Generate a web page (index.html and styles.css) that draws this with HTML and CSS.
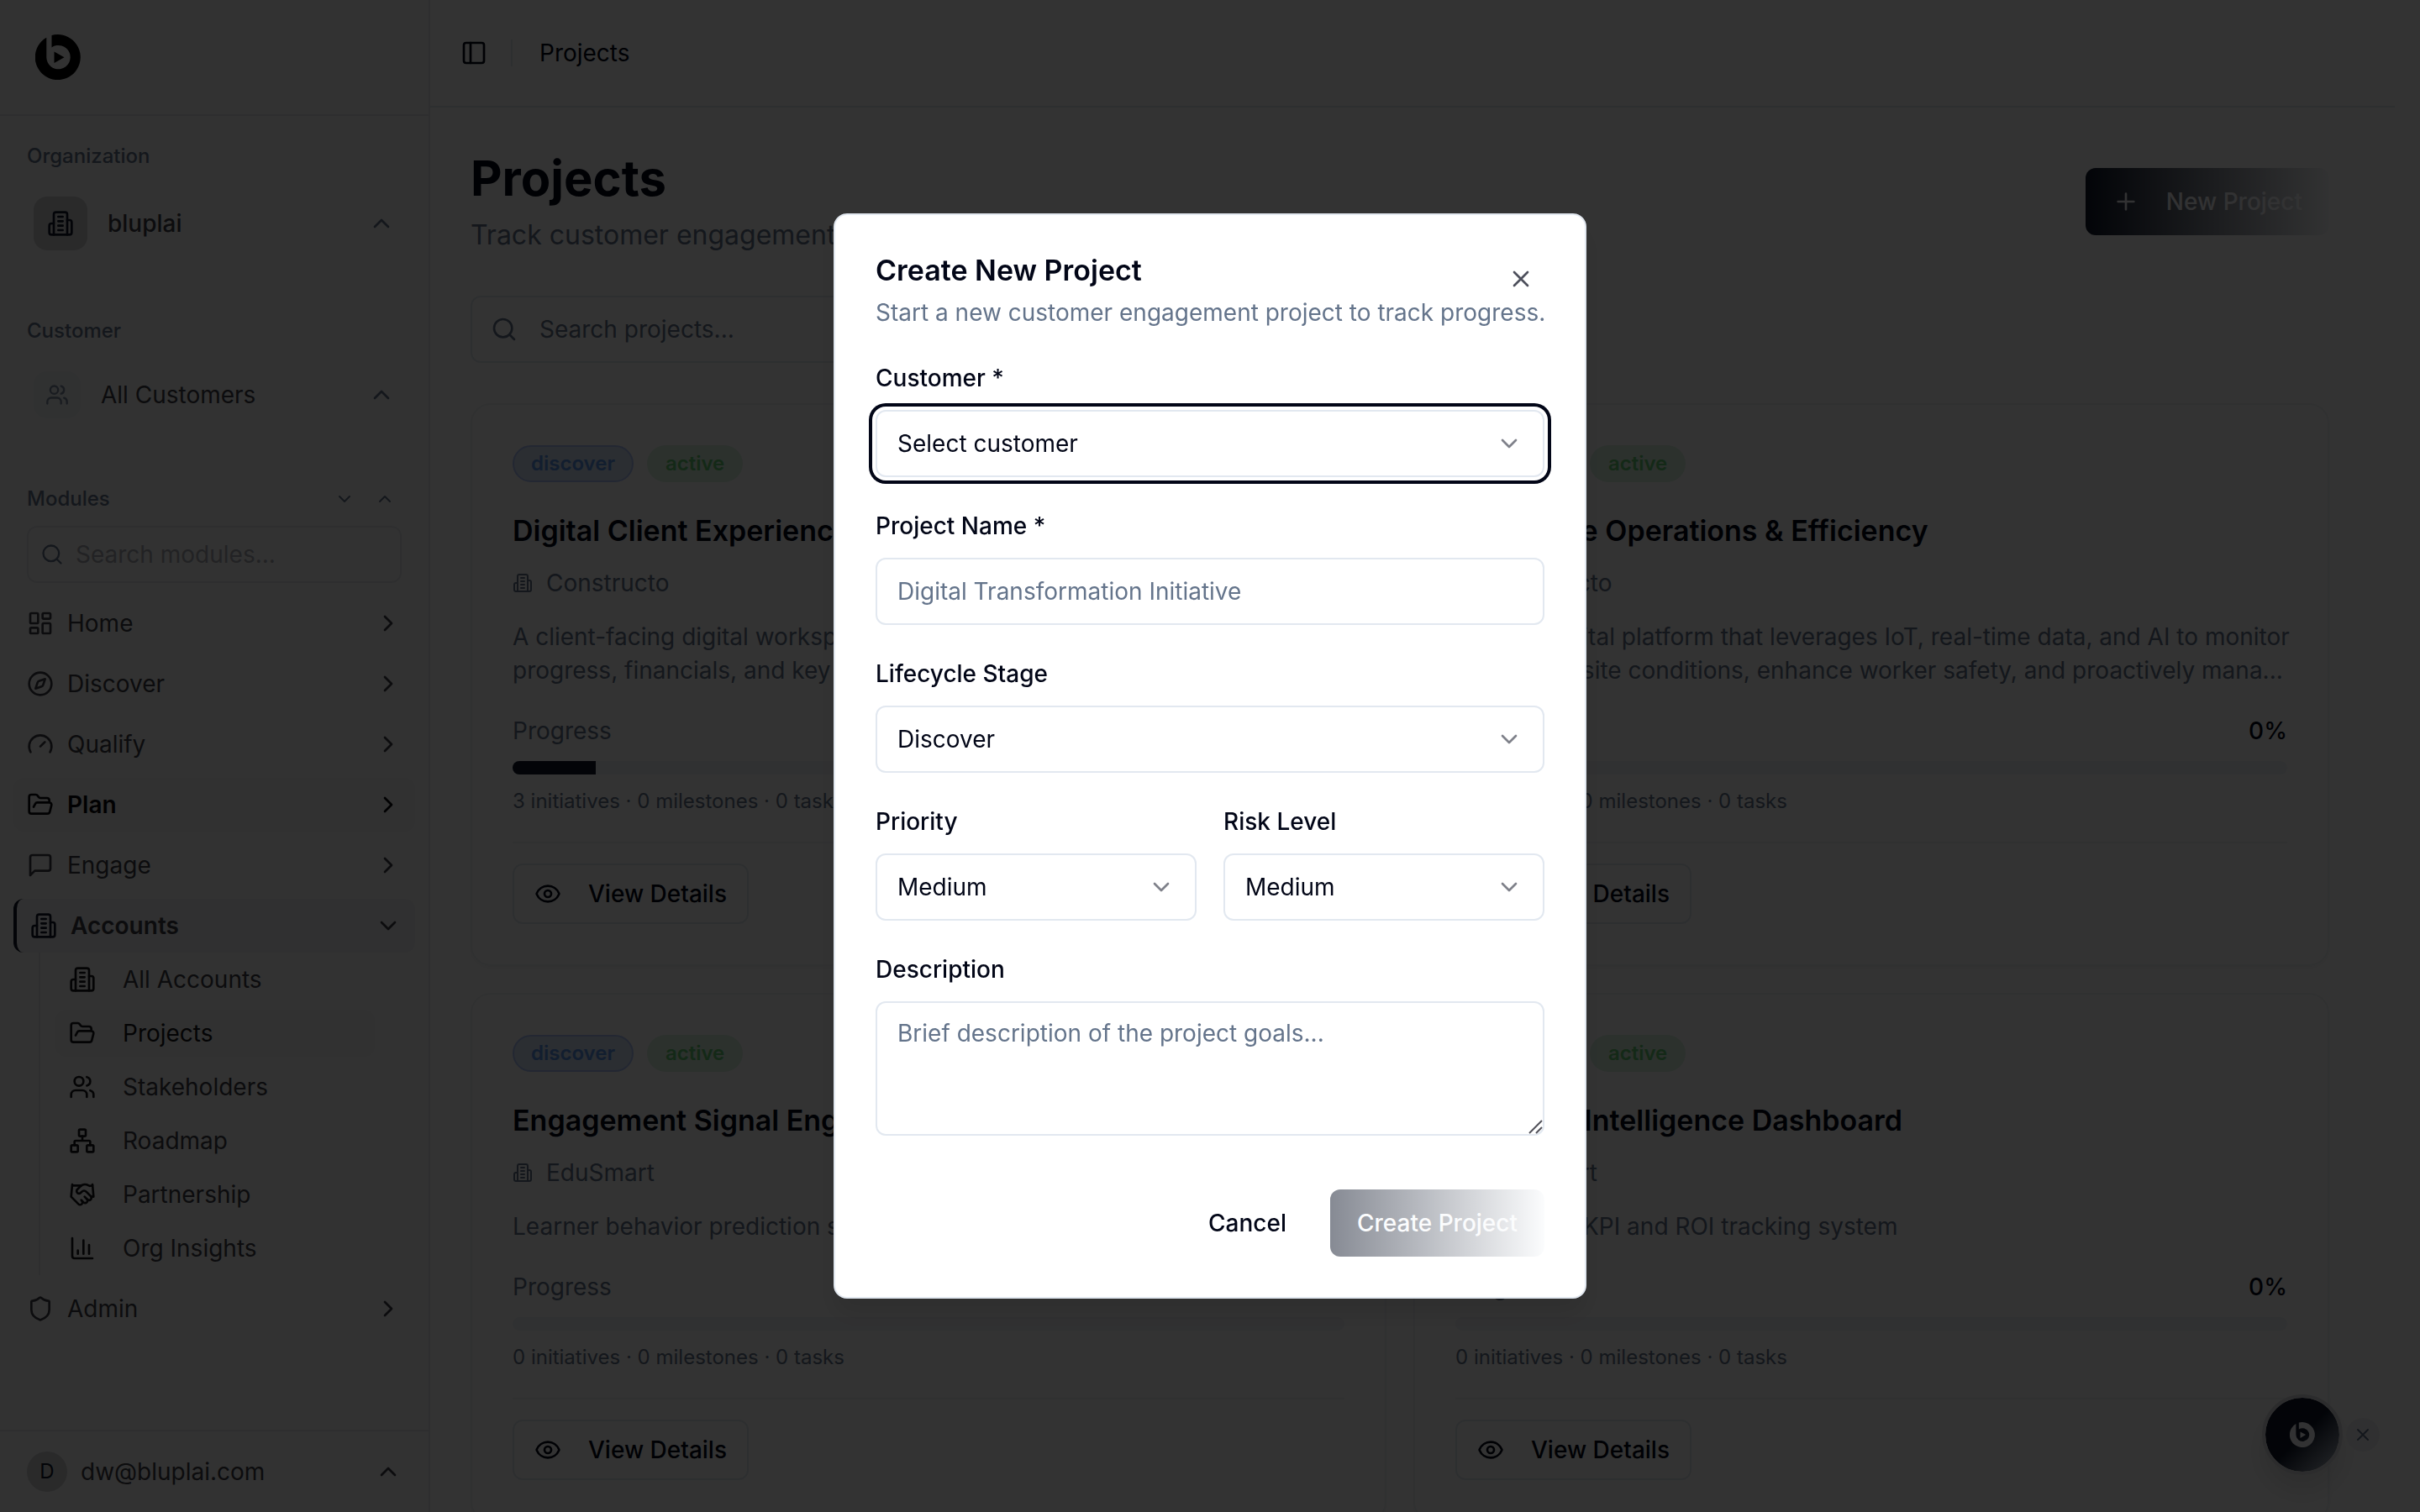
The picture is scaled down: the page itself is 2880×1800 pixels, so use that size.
FILE: index.html
```html
<!DOCTYPE html>
<html lang="en">
<head>
<meta charset="UTF-8">
<meta name="viewport" content="width=device-width, initial-scale=1.0">
<title>Projects</title>
<link rel="stylesheet" href="styles.css">
</head>
<body>

<!-- Icon set -->
<svg class="sprite" aria-hidden="true">
    <symbol id="logo" viewBox="0 0 54 54">
        <path fill="currentColor" fill-rule="evenodd" d="M19.500 1.100A27 27 0 1 1 13.300 3.700V27.200A14.200 14.200 0 1 0 19.500 15.400Z"/>
        <path fill="currentColor" d="M22.500 20.500L34.500 27.200L22.500 34Z"/>
    </symbol>
    <symbol id="building" viewBox="0 0 24 24"><path d="M6 22V4a2 2 0 0 1 2-2h8a2 2 0 0 1 2 2v18Z"/><path d="M6 12H4a2 2 0 0 0-2 2v6a2 2 0 0 0 2 2h2"/><path d="M18 9h2a2 2 0 0 1 2 2v9a2 2 0 0 1-2 2h-2"/><path d="M10 6h4M10 10h4M10 14h4M10 18h4"/></symbol>
    <symbol id="users" viewBox="0 0 24 24"><path d="M16 21v-2a4 4 0 0 0-4-4H6a4 4 0 0 0-4 4v2"/><circle cx="9" cy="7" r="4"/><path d="M22 21v-2a4 4 0 0 0-3-3.870M16 3.130a4 4 0 0 1 0 7.750"/></symbol>
    <symbol id="dashboard" viewBox="0 0 24 24"><rect x="3" y="3" width="7" height="9" rx="1"/><rect x="14" y="3" width="7" height="5" rx="1"/><rect x="14" y="12" width="7" height="9" rx="1"/><rect x="3" y="16" width="7" height="5" rx="1"/></symbol>
    <symbol id="compass" viewBox="0 0 24 24"><path d="m16.240 7.760-1.804 5.411a2 2 0 0 1-1.265 1.265L7.760 16.240l1.804-5.411a2 2 0 0 1 1.265-1.265z"/><circle cx="12" cy="12" r="10"/></symbol>
    <symbol id="gauge" viewBox="0 0 24 24"><path d="m12 14 4-4"/><path d="M3.340 19a10 10 0 1 1 17.320 0"/></symbol>
    <symbol id="folder" viewBox="0 0 24 24"><path d="m6 14 1.500-2.900A2 2 0 0 1 9.240 10H20a2 2 0 0 1 1.940 2.500l-1.540 6a2 2 0 0 1-1.950 1.500H4a2 2 0 0 1-2-2V5a2 2 0 0 1 2-2h3.900a2 2 0 0 1 1.690.9l.81 1.200a2 2 0 0 0 1.670.9H18a2 2 0 0 1 2 2v2"/></symbol>
    <symbol id="message" viewBox="0 0 24 24"><path d="M21 15a2 2 0 0 1-2 2H7l-4 4V5a2 2 0 0 1 2-2h14a2 2 0 0 1 2 2z"/></symbol>
    <symbol id="network" viewBox="0 0 24 24"><rect x="16" y="16" width="6" height="6" rx="1"/><rect x="2" y="16" width="6" height="6" rx="1"/><rect x="9" y="2" width="6" height="6" rx="1"/><path d="M5 16v-3a1 1 0 0 1 1-1h12a1 1 0 0 1 1 1v3M12 12V8"/></symbol>
    <symbol id="handshake" viewBox="0 0 24 24"><path d="m11 17 2 2a1 1 0 1 0 3-3"/><path d="m14 14 2.500 2.500a1 1 0 1 0 3-3l-3.880-3.880a3 3 0 0 0-4.240 0l-.88.88a1 1 0 1 1-3-3l2.810-2.810a5.790 5.790 0 0 1 7.060-.87l.47.28a2 2 0 0 0 1.420.25L21 4"/><path d="m21 3 1 11h-2M3 3 2 14l6.500 6.500a1 1 0 1 0 3-3M3 4h8"/></symbol>
    <symbol id="chart" viewBox="0 0 24 24"><path d="M3 3v16a2 2 0 0 0 2 2h16M18 17V9M13 17V5M8 17v-3"/></symbol>
    <symbol id="shield" viewBox="0 0 24 24"><path d="M20 13c0 5-3.500 7.500-7.660 8.950a1 1 0 0 1-.67-.01C7.500 20.500 4 18 4 13V6a1 1 0 0 1 1-1c2 0 4.500-1.200 6.240-2.720a1.170 1.170 0 0 1 1.520 0C14.510 3.810 17 5 19 5a1 1 0 0 1 1 1z"/></symbol>
    <symbol id="search" viewBox="0 0 24 24"><circle cx="11" cy="11" r="8"/><path d="m21 21-4.300-4.300"/></symbol>
    <symbol id="panel" viewBox="0 0 24 24"><rect x="3" y="3" width="18" height="18" rx="2"/><path d="M9 3v18"/></symbol>
    <symbol id="eye" viewBox="0 0 24 24"><path d="M2.062 12.348a1 1 0 0 1 0-.696 10.750 10.750 0 0 1 19.876 0 1 1 0 0 1 0 .696 10.750 10.750 0 0 1-19.876 0"/><circle cx="12" cy="12" r="3"/></symbol>
    <symbol id="plus" viewBox="0 0 24 24"><path d="M5 12h14M12 5v14"/></symbol>
    <symbol id="close" viewBox="0 0 24 24"><path d="M18 6 6 18M6 6l12 12"/></symbol>
    <symbol id="up" viewBox="0 0 24 24"><path d="m18 15-6-6-6 6"/></symbol>
    <symbol id="down" viewBox="0 0 24 24"><path d="m6 9 6 6 6-6"/></symbol>
    <symbol id="right" viewBox="0 0 24 24"><path d="m9 18 6-6-6-6"/></symbol>
</svg>

<div class="app">
    <aside class="sidebar">
        <div class="sidebar-header">
            <svg class="logo"><use href="#logo"/></svg>
        </div>

        <div class="sidebar-content">
            <section class="group">
                <h2 class="group-label">Organization</h2>
                <button class="switcher" type="button">
                    <span class="org-icon"><svg class="icon"><use href="#building"/></svg></span>
                    <span class="grow">bluplai</span>
                    <svg class="icon muted"><use href="#up"/></svg>
                </button>
            </section>

            <section class="group">
                <h2 class="group-label">Customer</h2>
                <button class="switcher" type="button">
                    <span class="customer-icon"><svg class="icon icon-md"><use href="#users"/></svg></span>
                    <span class="grow">All Customers</span>
                    <svg class="icon muted"><use href="#up"/></svg>
                </button>
            </section>

            <section class="group">
                <div class="modules-header">
                    <h2>Modules</h2>
                    <button type="button" aria-label="Expand all"><svg class="icon icon-sm"><use href="#down"/></svg></button>
                    <button type="button" aria-label="Collapse all"><svg class="icon icon-sm"><use href="#up"/></svg></button>
                </div>
                <label class="module-search">
                    <svg class="icon icon-md"><use href="#search"/></svg>
                    <input type="text" placeholder="Search modules..." aria-label="Search modules">
                </label>
                <nav class="nav">
                    <a class="nav-item" href="#"><svg class="icon"><use href="#dashboard"/></svg><span class="grow">Home</span><svg class="icon"><use href="#right"/></svg></a>
                    <a class="nav-item" href="#"><svg class="icon"><use href="#compass"/></svg><span class="grow">Discover</span><svg class="icon"><use href="#right"/></svg></a>
                    <a class="nav-item" href="#"><svg class="icon"><use href="#gauge"/></svg><span class="grow">Qualify</span><svg class="icon"><use href="#right"/></svg></a>
                    <a class="nav-item highlighted" href="#"><svg class="icon"><use href="#folder"/></svg><span class="grow">Plan</span><svg class="icon"><use href="#right"/></svg></a>
                    <a class="nav-item" href="#"><svg class="icon"><use href="#message"/></svg><span class="grow">Engage</span><svg class="icon"><use href="#right"/></svg></a>
                    <div class="nav-open">
                        <a class="nav-item current" href="#"><svg class="icon"><use href="#building"/></svg><span class="grow">Accounts</span><svg class="icon"><use href="#down"/></svg></a>
                        <div class="subnav">
                            <a class="subnav-item" href="#"><svg class="icon"><use href="#building"/></svg>All Accounts</a>
                            <a class="subnav-item active" href="#"><svg class="icon"><use href="#folder"/></svg>Projects</a>
                            <a class="subnav-item" href="#"><svg class="icon"><use href="#users"/></svg>Stakeholders</a>
                            <a class="subnav-item" href="#"><svg class="icon"><use href="#network"/></svg>Roadmap</a>
                            <a class="subnav-item" href="#"><svg class="icon"><use href="#handshake"/></svg>Partnership</a>
                            <a class="subnav-item" href="#"><svg class="icon"><use href="#chart"/></svg>Org Insights</a>
                        </div>
                    </div>
                    <a class="nav-item" href="#"><svg class="icon"><use href="#shield"/></svg><span class="grow">Admin</span><svg class="icon"><use href="#right"/></svg></a>
                </nav>
            </section>
        </div>

        <button class="user-menu" type="button">
            <span class="avatar">D</span>
            <span class="grow">dw@bluplai.com</span>
            <svg class="icon"><use href="#up"/></svg>
        </button>
    </aside>

    <main class="main">
        <header class="topbar">
            <button type="button" aria-label="Toggle sidebar"><svg class="icon"><use href="#panel"/></svg></button>
            <span class="separator"></span>
            <span>Projects</span>
        </header>

        <div class="content">
            <div class="page-header">
                <div>
                    <h1>Projects</h1>
                    <p>Track customer engagement projects</p>
                </div>
                <button class="btn btn-primary" type="button"><svg class="icon"><use href="#plus"/></svg>New Project</button>
            </div>

            <label class="project-search">
                <svg class="icon"><use href="#search"/></svg>
                <input type="text" placeholder="Search projects..." aria-label="Search projects">
            </label>

            <div class="cards">
                <article class="card">
                    <div class="badges"><span class="badge stage">discover</span><span class="badge status">active</span></div>
                    <h3>Digital Client Experience</h3>
                    <div class="account"><svg class="icon icon-sm"><use href="#building"/></svg>Constructo</div>
                    <p class="description">A client-facing digital workspace that gives owners a live view of<br>progress, financials, and key decisions across every project.</p>
                    <div class="progress-row"><span>Progress</span><strong>10%</strong></div>
                    <div class="bar"><div class="bar-fill" style="width: 10%"></div></div>
                    <div class="stats">3 initiatives · 0 milestones · 0 tasks</div>
                    <div class="card-footer"><button class="btn btn-outline" type="button"><svg class="icon"><use href="#eye"/></svg>View Details</button></div>
                </article>

                <article class="card">
                    <div class="badges"><span class="badge stage">discover</span><span class="badge status">active</span></div>
                    <h3>Smart Site Operations &amp; Efficiency</h3>
                    <div class="account"><svg class="icon icon-sm"><use href="#building"/></svg>Constructo</div>
                    <p class="description">A smart digital platform that leverages IoT, real-time data, and AI to monitor<br>production site conditions, enhance worker safety, and proactively mana...</p>
                    <div class="progress-row"><span>Progress</span><strong>0%</strong></div>
                    <div class="bar"></div>
                    <div class="stats">0 initiatives · 0 milestones · 0 tasks</div>
                    <div class="card-footer"><button class="btn btn-outline" type="button"><svg class="icon"><use href="#eye"/></svg>View Details</button></div>
                </article>

                <article class="card">
                    <div class="badges"><span class="badge stage">discover</span><span class="badge status">active</span></div>
                    <h3>Engagement Signal Engine</h3>
                    <div class="account"><svg class="icon icon-sm"><use href="#building"/></svg>EduSmart</div>
                    <p class="description">Learner behavior prediction system</p>
                    <div class="progress-row"><span>Progress</span><strong>0%</strong></div>
                    <div class="bar"></div>
                    <div class="stats">0 initiatives · 0 milestones · 0 tasks</div>
                    <div class="card-footer"><button class="btn btn-outline" type="button"><svg class="icon"><use href="#eye"/></svg>View Details</button></div>
                </article>

                <article class="card">
                    <div class="badges"><span class="badge stage">discover</span><span class="badge status">active</span></div>
                    <h3>Learning Intelligence Dashboard</h3>
                    <div class="account"><svg class="icon icon-sm"><use href="#building"/></svg>EduSmart</div>
                    <p class="description">Automated KPI and ROI tracking system</p>
                    <div class="progress-row"><span>Progress</span><strong>0%</strong></div>
                    <div class="bar"></div>
                    <div class="stats">0 initiatives · 0 milestones · 0 tasks</div>
                    <div class="card-footer"><button class="btn btn-outline" type="button"><svg class="icon"><use href="#eye"/></svg>View Details</button></div>
                </article>
            </div>
        </div>
    </main>
</div>

<!-- Floating assistant -->
<div class="assistant">
    <button class="assistant-open" type="button" aria-label="Open assistant"><svg class="assistant-logo"><use href="#logo"/></svg></button>
    <button class="assistant-hide" type="button" aria-label="Hide assistant"><svg class="icon icon-sm"><use href="#close"/></svg></button>
</div>

<div class="overlay">
    <form class="modal" role="dialog" aria-labelledby="modal-title">
        <button class="modal-close" type="button" aria-label="Close"><svg class="icon"><use href="#close"/></svg></button>
        <h2 id="modal-title">Create New Project</h2>
        <p class="modal-intro">Start a new customer engagement project to track progress.</p>

        <div class="fields">
            <div class="field">
                <label for="customer">Customer *</label>
                <div class="select focused">
                    <select id="customer"><option>Select customer</option></select>
                    <svg class="icon"><use href="#down"/></svg>
                </div>
            </div>
            <div class="field">
                <label for="name">Project Name *</label>
                <input id="name" type="text" placeholder="Digital Transformation Initiative">
            </div>
            <div class="field">
                <label for="stage">Lifecycle Stage</label>
                <div class="select">
                    <select id="stage"><option>Discover</option></select>
                    <svg class="icon"><use href="#down"/></svg>
                </div>
            </div>
            <div class="field-pair">
                <div class="field">
                    <label for="priority">Priority</label>
                    <div class="select">
                        <select id="priority"><option>Medium</option></select>
                        <svg class="icon"><use href="#down"/></svg>
                    </div>
                </div>
                <div class="field">
                    <label for="risk">Risk Level</label>
                    <div class="select">
                        <select id="risk"><option>Medium</option></select>
                        <svg class="icon"><use href="#down"/></svg>
                    </div>
                </div>
            </div>
            <div class="field">
                <label for="description">Description</label>
                <div class="textarea">
                    <textarea id="description" placeholder="Brief description of the project goals..."></textarea>
                    <svg class="grip" viewBox="0 0 18 18"><path d="M2 17 17 2M10 17l7-7"/></svg>
                </div>
            </div>
        </div>

        <div class="modal-footer">
            <button class="btn btn-ghost" type="button">Cancel</button>
            <button class="btn btn-primary" type="submit" disabled>Create Project</button>
        </div>
    </form>
</div>

</body>
</html>
```
FILE: styles.css
```css
* {
    box-sizing: border-box;
}

body {
    margin: 0;
    font-family: Inter, "Liberation Sans", sans-serif;
    font-size: 28px;
    line-height: 40px;
    color: #020617;
    background: #fff;
}

h1, h2, h3, p {
    margin: 0;
}

button, input, select, textarea {
    font: inherit;
    color: inherit;
}

button {
    padding: 0;
    border: 0;
    background: none;
    text-align: left;
    cursor: pointer;
}

a {
    color: inherit;
    text-decoration: none;
}

.sprite {
    display: none;
}

.icon {
    flex: none;
    width: 32px;
    height: 32px;
    fill: none;
    stroke: currentColor;
    stroke-width: 2;
    stroke-linecap: round;
    stroke-linejoin: round;
}

.icon-md {
    width: 28px;
    height: 28px;
}

.icon-sm {
    width: 24px;
    height: 24px;
}

.muted {
    color: #64748b;
}

.grow {
    flex: 1;
}

.app {
    display: flex;
    height: 100vh;
    overflow: hidden;
}

/* Sidebar */
.sidebar {
    display: flex;
    flex-direction: column;
    flex: none;
    width: 512px;
    border-right: 2px solid #e5e7eb;
    background: #fafafa;
    color: #3f3f46;
}

.sidebar-header {
    display: flex;
    align-items: center;
    height: 138px;
    padding: 0 42px;
    border-bottom: 2px solid #e5e7eb;
}

.logo {
    width: 54px;
    height: 54px;
    color: #000;
}

.sidebar-content {
    display: flex;
    flex-direction: column;
    flex: 1;
    gap: 62px;
    padding-top: 32px;
}

.group-label, .modules-header h2 {
    font-size: 24px;
    font-weight: 500;
    line-height: 32px;
    color: #64748b;
}

.group-label {
    margin: 0 32px 14px;
}

.switcher {
    display: flex;
    align-items: center;
    gap: 24px;
    width: 100%;
    padding: 18px 40px;
    font-weight: 500;
}

.org-icon, .customer-icon {
    display: flex;
    align-items: center;
    justify-content: center;
    border-radius: 16px;
}

.org-icon {
    width: 64px;
    height: 64px;
    background: #d0d1d3;
    color: #0f172a;
}

.customer-icon {
    width: 56px;
    height: 56px;
    background: #eef2f6;
    color: #7d8ba0;
}

.switcher:has(.customer-icon) {
    font-weight: 400;
}

.modules-header {
    display: flex;
    align-items: center;
    height: 32px;
    margin-bottom: 16px;
    padding: 0 28px 0 32px;
    color: #64748b;
}

.modules-header h2 {
    flex: 1;
}

.modules-header button {
    display: flex;
    justify-content: center;
    width: 48px;
}

.module-search {
    display: flex;
    align-items: center;
    gap: 14px;
    height: 68px;
    margin: 0 32px 16px;
    padding: 0 14px;
    border: 2px solid #e5e7eb;
    border-radius: 12px;
    color: #64748b;
}

.module-search input, .project-search input {
    flex: 1;
    min-width: 0;
    padding: 0;
    border: 0;
    outline: 0;
    background: none;
}

.module-search input::placeholder {
    color: #a8acb3;
}

.nav {
    display: flex;
    flex-direction: column;
    gap: 8px;
    padding: 0 16px;
}

.nav-item {
    display: flex;
    align-items: center;
    gap: 16px;
    height: 64px;
    padding: 0 16px;
    border-radius: 12px;
}

.nav-item.highlighted {
    background: #f4f4f5;
    color: #09090b;
    font-weight: 600;
}

.nav-item.current {
    border-left: 4px solid #0f172a;
    background: #f1f1f3;
    font-weight: 600;
}

.nav-item.current .icon:first-child {
    color: #0f172a;
}

.subnav {
    display: flex;
    flex-direction: column;
    gap: 8px;
    margin-left: 30px;
    padding: 4px 48px 4px 18px;
    border-left: 2px solid #e5e7eb;
}

.subnav-item {
    display: flex;
    align-items: center;
    gap: 32px;
    height: 56px;
    padding: 0 16px;
    border-radius: 12px;
}

.subnav-item .icon {
    color: #18181b;
}

.subnav-item.active {
    background: #f4f4f5;
    color: #18181b;
}

.user-menu {
    display: flex;
    align-items: center;
    gap: 16px;
    height: 98px;
    padding: 0 32px;
    border-top: 2px solid #e5e7eb;
}

.avatar {
    display: flex;
    align-items: center;
    justify-content: center;
    width: 48px;
    height: 48px;
    border-radius: 50%;
    background: #d0d1d3;
    color: #0f172a;
    font-size: 24px;
}

/* Main area */
.main {
    flex: 1;
    min-width: 0;
}

.topbar {
    display: flex;
    align-items: center;
    gap: 28px;
    height: 128px;
    margin-right: 30px;
    padding-left: 36px;
    border-bottom: 2px solid #e2e8f0;
}

.topbar button {
    display: flex;
}

.topbar .separator {
    width: 2px;
    height: 32px;
    margin-right: 4px;
    background: #e2e8f0;
}

.content {
    padding: 48px 108px 48px 48px;
}

.page-header {
    display: flex;
    align-items: center;
    justify-content: space-between;
    margin-bottom: 48px;
}

.page-header h1 {
    font-size: 58px;
    font-weight: 700;
    line-height: 72px;
}

.page-header p {
    margin-top: 8px;
    font-size: 32px;
    line-height: 48px;
    color: #64748b;
}

.btn {
    display: inline-flex;
    align-items: center;
    gap: 32px;
    height: 80px;
    padding: 0 32px;
    border-radius: 12px;
    font-weight: 500;
}

.btn-primary {
    background: linear-gradient(90deg, #0f172a, #f8fafc);
    color: #f8fafc;
}

.btn-primary:disabled {
    opacity: 0.5;
}

.btn-outline {
    height: 72px;
    padding: 0 24px;
    border: 2px solid #e2e8f0;
}

.project-search {
    display: flex;
    align-items: center;
    gap: 26px;
    width: 40%;
    height: 80px;
    margin-bottom: 48px;
    padding: 0 22px;
    border: 2px solid #e2e8f0;
    border-radius: 12px;
    color: #64748b;
}

.project-search input::placeholder {
    color: #64748b;
}

.cards {
    display: grid;
    grid-template-columns: 1fr 1fr;
    gap: 32px;
}

.card {
    min-width: 0;
    padding: 48px;
    border: 2px solid #f1f3f6;
    border-radius: 24px;
    box-shadow: 0 2px 4px rgba(0, 0, 0, 0.05);
}

.badges {
    display: flex;
    gap: 16px;
}

.badge {
    padding: 4px 20px;
    border: 2px solid transparent;
    border-radius: 22px;
    font-size: 24px;
    font-weight: 600;
    line-height: 32px;
}

.stage {
    border-color: #adc4fa;
    background: #d6e3f8;
    color: #5a94ea;
}

.status {
    background: #dcf3e2;
    color: #64cc74;
}

.card h3 {
    margin: 32px 0 16px;
    font-size: 34px;
    font-weight: 600;
    line-height: 52px;
}

.account {
    display: flex;
    align-items: center;
    gap: 16px;
    margin-bottom: 24px;
    color: #64748b;
}

.description {
    margin-bottom: 32px;
    color: #64748b;
    white-space: nowrap;
}

.progress-row {
    display: flex;
    justify-content: space-between;
    margin-bottom: 16px;
    color: #64748b;
}

.progress-row strong {
    color: #020617;
    font-weight: 500;
}

.bar {
    overflow: hidden;
    height: 16px;
    border-radius: 8px;
    background: #f1f5f9;
}

.bar-fill {
    height: 100%;
    background: #0f172a;
}

.stats {
    margin: 16px 0 32px;
    font-size: 24px;
    line-height: 32px;
    color: #64748b;
}

.card-footer {
    padding-top: 24px;
    border-top: 2px solid #f1f3f6;
}

/* Assistant */
.assistant {
    position: fixed;
    right: 48px;
    bottom: 44px;
    display: flex;
    align-items: center;
    gap: 4px;
}

.assistant button {
    display: flex;
    align-items: center;
    justify-content: center;
    border-radius: 50%;
}

.assistant-open {
    width: 96px;
    height: 96px;
    border: 4px solid #dcdddf;
    background: linear-gradient(135deg, #0f172a 50%, #cbd5e1) border-box;
    background-clip: padding-box;
    box-shadow: 0 20px 30px rgba(0, 0, 0, 0.1);
    color: #f8fafc;
}

.assistant-logo {
    width: 30px;
    height: 30px;
}

.assistant-hide {
    width: 40px;
    height: 40px;
    background: #f1f1f3;
    color: #64748b;
}

/* Modal */
.overlay {
    position: fixed;
    inset: 0;
    display: flex;
    align-items: center;
    justify-content: center;
    background: rgba(0, 0, 0, 0.8);
}

.modal {
    position: relative;
    width: 100%;
    max-width: 896px;
    padding: 48px;
    border: 2px solid #e2e8f0;
    border-radius: 16px;
    background: #fff;
    box-shadow: 0 20px 30px rgba(0, 0, 0, 0.1);
}

.modal-close {
    position: absolute;
    top: 60px;
    right: 60px;
    display: flex;
    opacity: 0.7;
}

.modal h2 {
    font-size: 34px;
    font-weight: 600;
    line-height: 36px;
}

.modal-intro {
    margin: 12px 0 40px;
    color: #64748b;
    white-space: nowrap;
}

.fields {
    display: flex;
    flex-direction: column;
    gap: 40px;
}

.field {
    display: flex;
    flex-direction: column;
    gap: 20px;
}

.field-pair {
    display: grid;
    grid-template-columns: 1fr 1fr;
    gap: 32px;
}

.field label {
    font-weight: 500;
    line-height: 36px;
}

.field input, .field select, .field textarea {
    width: 100%;
    height: 80px;
    padding: 0 24px;
    border: 2px solid #e2e8f0;
    border-radius: 12px;
    outline: 0;
    background: #fff;
    appearance: none;
}

.field ::placeholder {
    color: #64748b;
}

.select, .textarea {
    display: grid;
}

.select > *, .textarea > * {
    grid-area: 1 / 1;
}

.select .icon {
    align-self: center;
    justify-self: end;
    margin-right: 26px;
    opacity: 0.5;
    pointer-events: none;
}

.focused select {
    box-shadow: 0 0 0 4px #fff, 0 0 0 8px #020617;
}

.field textarea {
    display: block;
    height: 160px;
    padding: 16px 24px;
    resize: none;
}

.grip {
    align-self: end;
    justify-self: end;
    width: 18px;
    height: 18px;
    margin: 2px;
    fill: none;
    stroke: #52525b;
    stroke-width: 2;
    pointer-events: none;
}

.modal-footer {
    display: flex;
    justify-content: flex-end;
    gap: 20px;
    margin-top: 64px;
}
```
